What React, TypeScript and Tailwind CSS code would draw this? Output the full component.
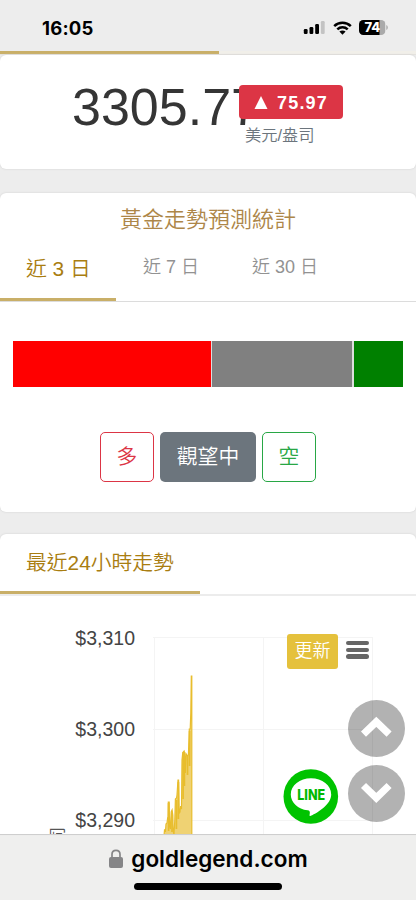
import { useState } from 'react';

const periods = [
    { label: '近 3 日', className: 'w-[116px] pl-[26px]' },
    { label: '近 7 日', className: 'w-[109px] pl-[27px]' },
    { label: '近 30 日', className: 'w-[118px] pl-[27px]' },
];

const forecast = [
    { value: 197.5, color: 'bg-[#ff0000]' },
    { value: 140, color: 'bg-[#808080]' },
    { value: 49.5, color: 'bg-[#008000]' },
];

const priceTicks = [
    { label: '$3,310', y: 41, baseline: 49 },
    { label: '$3,300', y: 133, baseline: 140 },
    { label: '$3,290', y: 224, baseline: 231 },
];

const timeTicks = [154, 263, 372];

const pricePoints = '164,240 164.5,234 165.5,235 166,228 167,227 167.5,223 168,224 168.3,206 169.2,206 169.6,231 170.4,233 171.2,216 172.1,214 172.8,219 173.2,235 174,239 174.8,224 175.4,203 176.5,202 177,199 178,184 178.6,184 179.2,217 180,216 180.7,210 181.5,213 182,164 182.6,158 183.2,156 184.1,155 184.8,158 185.3,177 186.2,158 187.5,160 188.4,159 189.3,133 190.2,133 190.8,117 191.3,80 191.8,80 191.8,240';

function StatusBar() {
    return (
        <header className="flex h-[51px] shrink-0 items-start justify-between bg-[#ededed] pl-[42px] pr-[28px] pt-[18px]">
            <span className="font-['Inter'] text-[18.5px] font-bold leading-5 tracking-[0.2px] text-black">16:05</span>
            <div className="flex items-center pt-[2px]">
                <svg width="22" height="15" viewBox="0 0 22 15">
                    <rect x="0.8" y="9" width="3.8" height="5" rx="1.2" />
                    <rect x="6.5" y="7" width="3.8" height="7" rx="1.2" />
                    <rect x="12.2" y="4" width="3.8" height="10" rx="1.2" />
                    <rect x="17.9" y="1" width="3.8" height="13" rx="1.2" fill="#c3c3c3" />
                </svg>
                <svg className="ml-[8px]" width="19" height="14" viewBox="0 0 19 14" fill="none" stroke="#000" strokeWidth="2.5">
                    <path d="M1.2 5.1C5.8 .6 13.2 .6 17.8 5.1" />
                    <path d="M4.3 8.4C7.2 5.6 11.8 5.6 14.7 8.4" />
                    <path d="M9.5 13.7 6.4 10.6C8.1 9 10.9 9 12.6 10.6Z" fill="#000" stroke="none" />
                </svg>
                <svg className="ml-[7px]" width="29" height="15" viewBox="0 0 29 15">
                    <clipPath id="battery"><rect width="26.5" height="15" rx="4.5" /></clipPath>
                    <g clipPath="url(#battery)">
                        <rect width="26.5" height="15" fill="#aaa" />
                        <rect width="20.5" height="15" />
                    </g>
                    <path d="M27.3 5c2 .7 2 4.3 0 5Z" fill="#aaa" />
                    <text x="13.2" y="12.2" textAnchor="middle" fill="#fff" fontFamily="Inter" fontWeight="800" fontSize="13" letterSpacing="-0.3">74</text>
                </svg>
            </div>
        </header>
    );
}

function PriceCard() {
    return (
        <section className="flex h-[114px] shrink-0 rounded-md bg-white pl-[72px] shadow-[0_0_2px_#ccc]">
            <span className="w-[167px] whitespace-nowrap pt-[22px] text-[52px] leading-[60px] text-[#353535]">3305.77</span>
            <div className="relative pt-[30px]">
                <div className="flex h-[34px] w-[104px] items-center justify-center rounded bg-[#dc3545] font-bold text-white">
                    <svg width="14" height="13" viewBox="0 0 14 13" fill="#fff"><path d="M7 0 13.5 13H.5Z" /></svg>
                    <span className="ml-[9px] pt-px text-[18px] leading-5 tracking-[1.2px]">75.97</span>
                </div>
                <p className="pl-[6px] pt-[4px] text-[16.3px] font-[350] leading-6 text-[#6c757d]">美元/盎司</p>
            </div>
        </section>
    );
}

function ForecastCard() {
    const [active, setActive] = useState(0);

    return (
        <section className="mt-6 h-[319px] shrink-0 rounded-md bg-white shadow-[0_0_2px_#ccc]">
            <h2 className="pt-[11px] text-center text-[22px] font-[350] leading-8 text-[#ad8648]">黃金走勢預測統計</h2>
            <nav className="flex h-[66px] border-b border-[#dcdcdc]">
                {periods.map((period, index) => (
                    <button
                        key={period.label}
                        onClick={() => setActive(index)}
                        className={`${period.className} h-[65px] whitespace-nowrap border-b-3 text-left font-[350] ${
                            index === active
                                ? 'border-[#c9af68] pt-[4px] text-[20.8px] text-[#a97d10]'
                                : 'border-transparent pt-px text-[18px] text-[#929292]'
                        }`}
                    >
                        {period.label}
                    </button>
                ))}
            </nav>
            <div className="mx-[13px] mt-[39px] flex h-[46px] gap-[1.5px] bg-[#dedede]">
                {forecast.map(item => (
                    <div key={item.color} className={item.color} style={{ flexGrow: item.value }} />
                ))}
            </div>
            <div className="mt-[45px] flex justify-center gap-[6px] text-[20.8px] font-[350]">
                <button className="h-[49.5px] w-[54px] rounded-[5px] border border-[#dc3545] text-[#dc3545]">多</button>
                <button className="h-[49.5px] w-24 rounded-[5px] bg-[#6c757d] text-white">觀望中</button>
                <button className="h-[49.5px] w-[54px] rounded-[5px] border border-[#28a745] text-[#28a745]">空</button>
            </div>
        </section>
    );
}

function PriceChart() {
    return (
        <svg className="block" width="416" height="240" viewBox="0 0 416 240">
            <g stroke="#f4f4f4">
                {priceTicks.map(tick => <path key={tick.y} d={`M153 ${tick.y + 0.5}H372`} />)}
                {timeTicks.map(x => <path key={x} d={`M${x + 0.5} 41V240`} />)}
            </g>
            <g fill="#444" fontSize="19.5" textAnchor="end">
                {priceTicks.map(tick => <text key={tick.y} x="135" y={tick.baseline}>{tick.label}</text>)}
            </g>
            <text x="63" y="231" fill="#555" fontSize="16" fontWeight="350" textAnchor="end" transform="rotate(-90 63 231)">美元/盎司</text>
            <polygon points={pricePoints} fill="#efd273" />
            <polyline points={pricePoints} fill="none" stroke="#e8bd2d" strokeWidth="1.2" />
            <path d="M176.4 204V233M178.4 186V223M183.1 156V203M184.4 156V190M187.5 160V179M189.6 135V170M172 217V236M168.6 207V235" stroke="#e8bd2d" strokeWidth="1.7" />
        </svg>
    );
}

function LineLogo() {
    return (
        <svg width="56" height="56" viewBox="0 0 56 56">
            <circle cx="27.8" cy="27.5" r="27.3" fill="#00c300" />
            <path d="M28 9.3C16.8 9.3 7.8 16.5 7.8 25.4c0 8 7.2 14.7 16.8 15.9 2 .3 2.5 1.4 2.2 3.1-.4 2.1-.3 3 .9 2.4 7.8-3.5 20.5-11.8 20.5-21.4C48.2 16.5 39.2 9.3 28 9.3Z" fill="#fff" />
            <text x="28.2" y="30.5" textAnchor="middle" fill="#00b900" fontFamily="Inter" fontWeight="800" fontSize="14" textLength="28" lengthAdjust="spacingAndGlyphs">LINE</text>
        </svg>
    );
}

function TrendCard() {
    return (
        <section className="relative mt-[22px] min-h-0 flex-1 overflow-hidden rounded-t-md bg-white shadow-[0_0_2px_#ccc]">
            <div className="h-[62px] border-b-2 border-[#ececec]">
                <h2 className="h-[60px] w-[200px] whitespace-nowrap border-b-3 border-[#c9af68] pl-[26px] pt-[13px] text-[20.8px] font-[350] leading-8 text-[#a97d10]">最近24小時走勢</h2>
            </div>
            <PriceChart />
            <button className="absolute left-[287px] top-[100px] h-[35px] w-[51px] rounded-[3px] bg-[#e5c13c] pb-px text-[18px] font-[350] leading-none text-white">更新</button>
            <button className="absolute left-[346px] top-[107px] flex w-[23px] flex-col gap-[2.5px]">
                <span className="h-[4.2px] rounded-full bg-[#666]" />
                <span className="h-[4.2px] rounded-full bg-[#666]" />
                <span className="h-[4.2px] rounded-full bg-[#666]" />
            </button>
            <div className="absolute left-[283px] top-[235px]"><LineLogo /></div>
            <button className="absolute left-[347.7px] top-[165.7px] flex size-[57px] items-center justify-center rounded-full bg-black/30">
                <svg width="57" height="57" viewBox="0 0 57 57" fill="none" stroke="#fff" strokeWidth="7.2">
                    <path d="M15.5 34.2 28.3 21.8 41.1 34.2" />
                </svg>
            </button>
            <button className="absolute left-[347.7px] top-[230.7px] flex size-[57px] items-center justify-center rounded-full bg-black/30">
                <svg width="57" height="57" viewBox="0 0 57 57" fill="none" stroke="#fff" strokeWidth="7.2">
                    <path d="M15.5 20.5 28.3 32.9 41.1 20.5" />
                </svg>
            </button>
        </section>
    );
}

function AddressBar() {
    return (
        <footer className="flex h-[66px] shrink-0 flex-col items-center border-t border-[#cfcfcf] bg-[#efefee]">
            <div className="flex h-[47px] items-center pl-px">
                <svg width="14" height="19" viewBox="0 0 14 19">
                    <path d="M3 9V5.2C3 .1 11 .1 11 5.2V9" fill="none" stroke="#858587" strokeWidth="1.7" />
                    <rect y="8" width="14" height="11" rx="2" fill="#858587" />
                </svg>
                <span className="ml-2 font-['Inter'] text-[22.5px] font-semibold leading-7 text-black">goldlegend.com</span>
            </div>
            <div className="mt-px h-[7px] w-[148px] rounded-full bg-black" />
        </footer>
    );
}

export default function App() {
    return (
        <div className="flex h-[900px] w-[416px] flex-col overflow-hidden bg-[#ededed] font-['Liberation_Sans','Noto_Sans_CJK_TC',sans-serif]">
            <StatusBar />
            <div className="h-1 shrink-0 border-b border-[#e5e3df] bg-[#f1efe9]">
                <div className="h-[2.5px] w-[218.5px] bg-[#c9af68]" />
            </div>
            <PriceCard />
            <ForecastCard />
            <TrendCard />
            <AddressBar />
        </div>
    );
}
